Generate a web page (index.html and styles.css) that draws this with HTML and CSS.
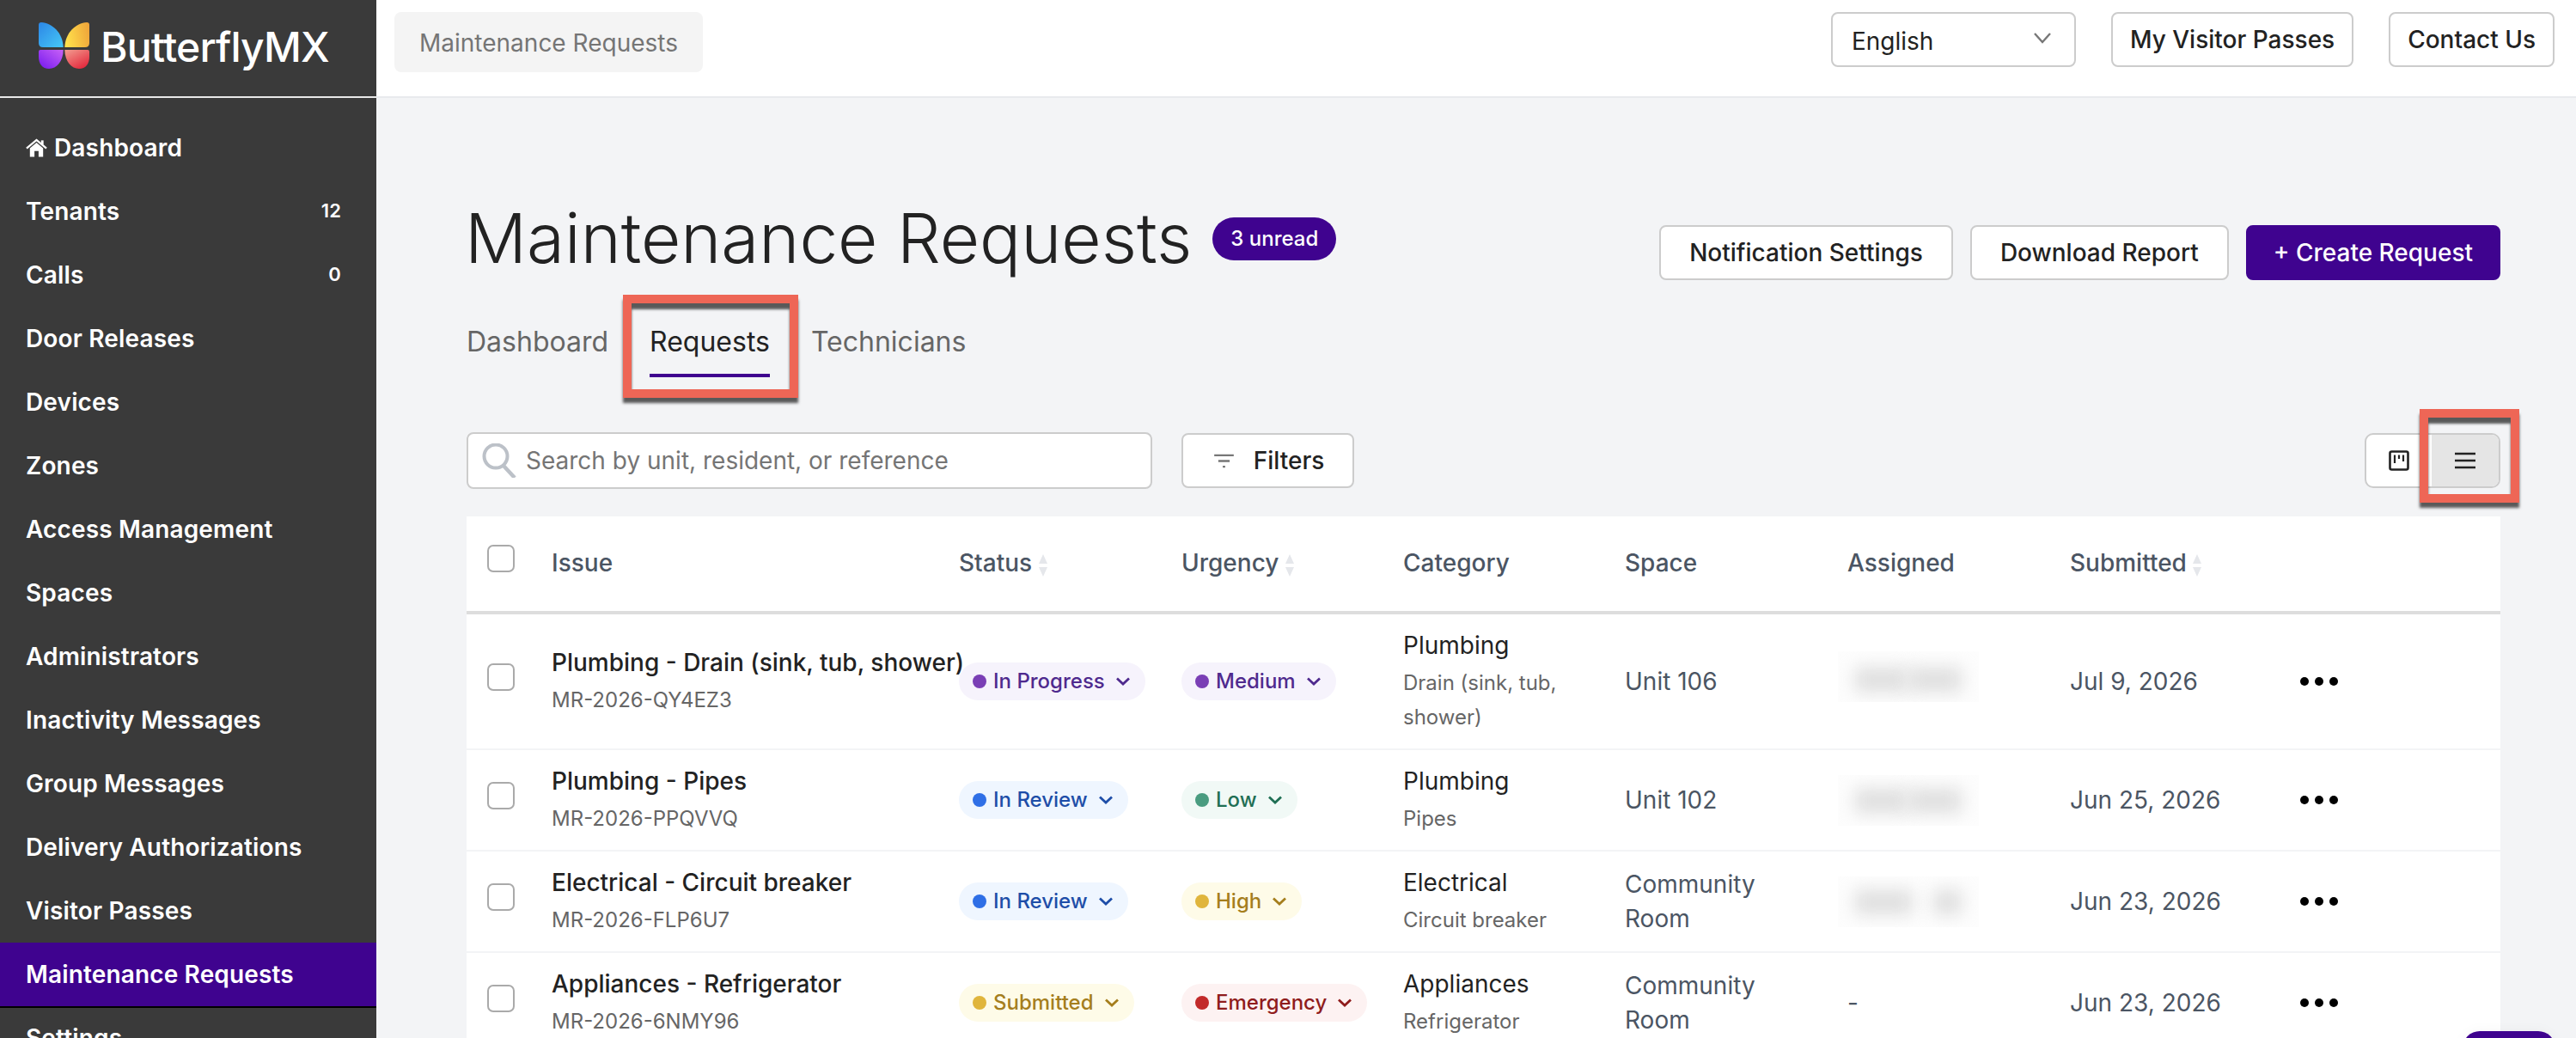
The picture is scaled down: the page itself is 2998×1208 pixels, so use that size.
FILE: index.html
```html
<!DOCTYPE html>
<html>
<head>
    <title>Maintenance Requests</title>
    <link rel="stylesheet" href="styles.css">
</head>
<body>
    <aside class="sidebar">
        <div class="logo">
            <svg class="logo-mark" viewBox="0 0 59 54">
                <defs>
                    <linearGradient id="wingBlue" x1="0" y1="0" x2="1" y2="1"><stop offset="0" stop-color="#2c86e6"/><stop offset="1" stop-color="#46c8f7"/></linearGradient>
                    <linearGradient id="wingYellow" x1="0" y1="0.6" x2="1" y2="0.4"><stop offset="0" stop-color="#ffe24c"/><stop offset="1" stop-color="#f0a63a"/></linearGradient>
                    <linearGradient id="wingPurple" x1="0" y1="1" x2="1" y2="0"><stop offset="0" stop-color="#7418ee"/><stop offset="1" stop-color="#c862f6"/></linearGradient>
                    <linearGradient id="wingRed" x1="0" y1="0" x2="0.7" y2="1"><stop offset="0" stop-color="#f29d90"/><stop offset="1" stop-color="#e42a3e"/></linearGradient>
                </defs>
                <path fill="url(#wingBlue)" d="M3 0C16 1 28 12 28.7 29L5 29Q0 29 0 24L0 3Q0 0 3 0Z"/>
                <path fill="url(#wingYellow)" d="M56 0C43 1 31 12 30.3 29L54 29Q59 29 59 24L59 3Q59 0 56 0Z"/>
                <path fill="url(#wingPurple)" d="M2 32L28.7 32C28.5 45 21 54 12 54C4 54 0 48 0 40L0 34Q0 32 2 32Z"/>
                <path fill="url(#wingRed)" d="M57 32L30.3 32C30.5 45 38 54 47 54C55 54 59 48 59 40L59 34Q59 32 57 32Z"/>
            </svg>
            <span class="logo-text">ButterflyMX</span>
        </div>
        <nav class="nav">
            <a class="nav-item">
                <span class="nav-label">
                    <svg class="home-icon" viewBox="0 0 26 22">
                        <path fill="#fff" d="M5 11.5L13 4.8L21 11.5V22H15.5V15H10.5V22H5Z"/>
                        <path fill="none" stroke="#fff" stroke-width="2.4" d="M1 11.6L13 1.6L25 11.6"/>
                        <path fill="#fff" d="M18.5 2H21.5V7H18.5Z"/>
                    </svg>
                    Dashboard
                </span>
            </a>
            <a class="nav-item"><span class="nav-label">Tenants</span><span class="nav-count">12</span></a>
            <a class="nav-item"><span class="nav-label">Calls</span><span class="nav-count">0</span></a>
            <a class="nav-item"><span class="nav-label">Door Releases</span></a>
            <a class="nav-item"><span class="nav-label">Devices</span></a>
            <a class="nav-item"><span class="nav-label">Zones</span></a>
            <a class="nav-item"><span class="nav-label">Access Management</span></a>
            <a class="nav-item"><span class="nav-label">Spaces</span></a>
            <a class="nav-item"><span class="nav-label">Administrators</span></a>
            <a class="nav-item"><span class="nav-label">Inactivity Messages</span></a>
            <a class="nav-item"><span class="nav-label">Group Messages</span></a>
            <a class="nav-item"><span class="nav-label">Delivery Authorizations</span></a>
            <a class="nav-item"><span class="nav-label">Visitor Passes</span></a>
            <a class="nav-item active"><span class="nav-label">Maintenance Requests</span></a>
            <a class="nav-item"><span class="nav-label">Settings</span></a>
        </nav>
    </aside>

    <div class="main">
        <header class="topbar">
            <div class="crumb">Maintenance Requests</div>
            <div class="topbar-actions">
                <div class="lang-select">
                    <span>English</span>
                    <svg class="lang-chevron" viewBox="0 0 22 14"><path d="M2 2L11 12L20 2" fill="none" stroke="#777" stroke-width="2.4"/></svg>
                </div>
                <button class="btn">My Visitor Passes</button>
                <button class="btn">Contact Us</button>
            </div>
        </header>

        <main class="content">
            <div class="page-head">
                <div class="page-title">
                    <h1>Maintenance Requests</h1>
                    <span class="unread">3 unread</span>
                </div>
                <div class="page-actions">
                    <button class="btn">Notification Settings</button>
                    <button class="btn">Download Report</button>
                    <button class="btn btn-primary">+ Create Request</button>
                </div>
            </div>

            <div class="tabs">
                <a class="tab">Dashboard</a>
                <a class="tab tab-active">Requests<span class="callout callout-tab"></span></a>
                <a class="tab">Technicians</a>
            </div>

            <div class="toolbar">
                <div class="search">
                    <svg class="search-icon" viewBox="0 0 40 40"><circle cx="16" cy="15" r="13.5" fill="none" stroke="#bcc1c8" stroke-width="4"/><path d="M25 26L38 40" stroke="#bcc1c8" stroke-width="4.5" fill="none"/></svg>
                    <span>Search by unit, resident, or reference</span>
                </div>
                <button class="btn btn-filter">
                    <svg class="filter-icon" viewBox="0 0 26 18"><path d="M1 2H25M6 9H20M11.5 16H14.5" stroke="#777" stroke-width="2.4" fill="none"/></svg>
                    Filters
                </button>
                <div class="view-toggle">
                    <button class="view-btn">
                        <svg class="view-icon" viewBox="0 0 24 24"><rect x="1.5" y="1.5" width="21" height="21" rx="2" fill="none" stroke="#222" stroke-width="2.6"/><path d="M7 5.5V15M12 5.5V10M17 5.5V13" stroke="#222" stroke-width="2.2" fill="none"/></svg>
                    </button>
                    <button class="view-btn view-active">
                        <svg class="view-icon" viewBox="0 0 24 20"><path d="M0 2H24M0 10H24M0 18H24" stroke="#222" stroke-width="2.4" fill="none"/></svg>
                        <span class="callout callout-view"></span>
                    </button>
                </div>
            </div>

            <table class="requests">
                <colgroup>
                    <col class="col-check"><col class="col-issue"><col class="col-std"><col class="col-urgency"><col class="col-urgency"><col class="col-std"><col class="col-std"><col class="col-date"><col>
                </colgroup>
                <thead>
                    <tr>
                        <th><input type="checkbox" class="check"></th>
                        <th>Issue</th>
                        <th>Status <svg class="sort" viewBox="0 0 10 26"><path d="M5 0L10 11H0ZM5 26L0 15H10Z" fill="#e5e7eb"/></svg></th>
                        <th>Urgency <svg class="sort" viewBox="0 0 10 26"><path d="M5 0L10 11H0ZM5 26L0 15H10Z" fill="#e5e7eb"/></svg></th>
                        <th>Category</th>
                        <th>Space</th>
                        <th>Assigned</th>
                        <th>Submitted <svg class="sort" viewBox="0 0 10 26"><path d="M5 0L10 11H0ZM5 26L0 15H10Z" fill="#e5e7eb"/></svg></th>
                        <th></th>
                    </tr>
                </thead>
                <tbody>
                    <tr>
                        <td><input type="checkbox" class="check"></td>
                        <td><div class="main-line issue-title">Plumbing - Drain (sink, tub, shower)</div><div class="sub-line">MR-2026-QY4EZ3</div></td>
                        <td><span class="pill purple"><i class="dot"></i>In Progress<svg class="chevron" viewBox="0 0 16 10"><path d="M1 1.5L8 8L15 1.5" fill="none" stroke="currentColor" stroke-width="2.8"/></svg></span></td>
                        <td><span class="pill purple"><i class="dot"></i>Medium<svg class="chevron" viewBox="0 0 16 10"><path d="M1 1.5L8 8L15 1.5" fill="none" stroke="currentColor" stroke-width="2.8"/></svg></span></td>
                        <td><div class="main-line">Plumbing</div><div class="sub-line wrap">Drain (sink, tub, shower)</div></td>
                        <td>Unit 106</td>
                        <td><div class="redacted redacted-up"><i class="lump"></i><i class="lump"></i></div></td>
                        <td>Jul 9, 2026</td>
                        <td><div class="more"><i></i><i></i><i></i></div></td>
                    </tr>
                    <tr>
                        <td><input type="checkbox" class="check"></td>
                        <td><div class="main-line issue-title">Plumbing - Pipes</div><div class="sub-line">MR-2026-PPQVVQ</div></td>
                        <td><span class="pill blue"><i class="dot"></i>In Review<svg class="chevron" viewBox="0 0 16 10"><path d="M1 1.5L8 8L15 1.5" fill="none" stroke="currentColor" stroke-width="2.8"/></svg></span></td>
                        <td><span class="pill green"><i class="dot"></i>Low<svg class="chevron" viewBox="0 0 16 10"><path d="M1 1.5L8 8L15 1.5" fill="none" stroke="currentColor" stroke-width="2.8"/></svg></span></td>
                        <td><div class="main-line">Plumbing</div><div class="sub-line">Pipes</div></td>
                        <td>Unit 102</td>
                        <td><div class="redacted"><i class="lump"></i><i class="lump"></i></div></td>
                        <td>Jun 25, 2026</td>
                        <td><div class="more"><i></i><i></i><i></i></div></td>
                    </tr>
                    <tr>
                        <td><input type="checkbox" class="check"></td>
                        <td><div class="main-line issue-title">Electrical - Circuit breaker</div><div class="sub-line">MR-2026-FLP6U7</div></td>
                        <td><span class="pill blue"><i class="dot"></i>In Review<svg class="chevron" viewBox="0 0 16 10"><path d="M1 1.5L8 8L15 1.5" fill="none" stroke="currentColor" stroke-width="2.8"/></svg></span></td>
                        <td><span class="pill yellow"><i class="dot"></i>High<svg class="chevron" viewBox="0 0 16 10"><path d="M1 1.5L8 8L15 1.5" fill="none" stroke="currentColor" stroke-width="2.8"/></svg></span></td>
                        <td><div class="main-line">Electrical</div><div class="sub-line">Circuit breaker</div></td>
                        <td>Community Room</td>
                        <td><div class="redacted redacted-gap"><i class="lump lump-wide"></i><i class="lump"></i></div></td>
                        <td>Jun 23, 2026</td>
                        <td><div class="more"><i></i><i></i><i></i></div></td>
                    </tr>
                    <tr>
                        <td><input type="checkbox" class="check"></td>
                        <td><div class="main-line issue-title">Appliances - Refrigerator</div><div class="sub-line">MR-2026-6NMY96</div></td>
                        <td><span class="pill yellow"><i class="dot"></i>Submitted<svg class="chevron" viewBox="0 0 16 10"><path d="M1 1.5L8 8L15 1.5" fill="none" stroke="currentColor" stroke-width="2.8"/></svg></span></td>
                        <td><span class="pill red"><i class="dot"></i>Emergency<svg class="chevron" viewBox="0 0 16 10"><path d="M1 1.5L8 8L15 1.5" fill="none" stroke="currentColor" stroke-width="2.8"/></svg></span></td>
                        <td><div class="main-line">Appliances</div><div class="sub-line">Refrigerator</div></td>
                        <td>Community Room</td>
                        <td>-</td>
                        <td>Jun 23, 2026</td>
                        <td><div class="more"><i></i><i></i><i></i></div></td>
                    </tr>
                </tbody>
            </table>
        </main>
    </div>

    <div class="chat-bubble"></div>
</body>
</html>
```

FILE: styles.css
```css
* {
    box-sizing: border-box;
}

html, body {
    height: 1208px;
    margin: 0;
    overflow: hidden;
}

body {
    display: flex;
    font-family: 'Inter', 'Liberation Sans', sans-serif;
    font-size: 28px;
    background-color: #f3f4f6;
    color: #222;
}

/* sidebar */
.sidebar {
    width: 438px;
    flex-shrink: 0;
    background-color: #3a3a3a;
    color: #fff;
}

.logo {
    height: 114px;
    padding: 26px 0 0 45px;
    display: flex;
    align-items: flex-start;
    gap: 13px;
    border-bottom: 2px solid #e8e8e8;
}

.logo-mark {
    width: 59px;
    height: 54px;
    flex-shrink: 0;
}

.logo-text {
    font-size: 48px;
    font-weight: 500;
    line-height: 58px;
    letter-spacing: -0.8px;
}

.nav {
    padding-top: 21px;
}

.nav-item {
    height: 74px;
    padding: 0 41px 0 30px;
    display: flex;
    align-items: center;
    justify-content: space-between;
    font-weight: 600;
    letter-spacing: 0.15px;
}

.nav-item.active {
    background-color: #3f038f;
    box-shadow: 0 2px 0 #000;
}

.nav-label {
    display: flex;
    align-items: center;
    gap: 8px;
}

.nav-count {
    font-size: 22px;
    margin-top: -2px;
}

.home-icon {
    width: 25px;
    height: 22px;
}

/* top bar */
.main {
    flex: 1;
    min-width: 0;
}

.topbar {
    height: 114px;
    padding: 14px 25px 0 21px;
    display: flex;
    justify-content: space-between;
    align-items: flex-start;
    background-color: #fff;
    border-bottom: 2px solid #e8eaed;
}

.crumb {
    width: 359px;
    height: 70px;
    line-height: 72px;
    text-align: center;
    background-color: #f4f4f4;
    border-radius: 8px;
    color: #757575;
}

.topbar-actions {
    display: flex;
    gap: 41px;
}

.lang-select {
    width: 285px;
    height: 64px;
    padding: 4px 26px 0 22px;
    display: flex;
    align-items: center;
    justify-content: space-between;
    background-color: #fff;
    border: 2px solid #ccc;
    border-radius: 8px;
}

.lang-chevron {
    width: 22px;
    height: 14px;
    margin-top: -8px;
}

.btn {
    height: 64px;
    padding: 0 20px;
    font-family: inherit;
    font-size: 28px;
    font-weight: 500;
    color: #222;
    background-color: #fff;
    border: 2px solid #ccc;
    border-radius: 8px;
}

.btn-primary {
    color: #fff;
    background-color: #3f038f;
    border-color: #3f038f;
}

/* page */
.content {
    padding: 115px 88px 0 105px;
}

.page-head {
    display: flex;
    justify-content: space-between;
    align-items: flex-start;
}

.page-title {
    display: flex;
    align-items: center;
    gap: 24px;
}

h1 {
    margin: 0 0 0 -2px;
    font-size: 80px;
    font-weight: 300;
    line-height: 96px;
    color: #222;
}

.unread {
    height: 50px;
    margin-top: 2px;
    padding: 0 21px;
    line-height: 50px;
    font-size: 24px;
    font-weight: 500;
    color: #fff;
    background-color: #3f038f;
    border-radius: 25px;
}

.page-actions {
    display: flex;
    gap: 20px;
    padding-top: 33px;
}

.page-actions .btn {
    padding: 0 33px;
}

.page-actions .btn-primary {
    padding: 0 30px;
}

.tabs {
    display: flex;
    gap: 48px;
    margin-top: 50px;
}

.tab {
    position: relative;
    height: 63px;
    line-height: 44px;
    font-size: 32px;
    color: #666;
}

.tab-active {
    color: #222;
    border-bottom: 4px solid #3f038f;
}

/* red annotation boxes drawn over the screenshot */
.callout {
    position: absolute;
    border: 10px solid #ee6656;
    box-shadow: 0 6px 3px rgba(50, 50, 50, 0.8), inset 0 7px 3px rgba(50, 50, 50, 0.8);
}

.callout-tab {
    top: -33px;
    left: -31px;
    right: -33px;
    bottom: -28px;
}

.callout-view {
    top: -30px;
    left: -14px;
    right: -24px;
    bottom: -19px;
}

.toolbar {
    display: flex;
    align-items: center;
    margin-top: 64px;
}

.search {
    width: 798px;
    height: 66px;
    padding: 0 16px;
    display: flex;
    align-items: center;
    gap: 11px;
    font-size: 28px;
    color: #757575;
    background-color: #fff;
    border: 2px solid #ccc;
    border-radius: 8px;
}

.search-icon {
    width: 40px;
    height: 40px;
    flex-shrink: 0;
}

.btn-filter {
    width: 201px;
    margin-left: 34px;
    padding: 0 0 0 2px;
    display: flex;
    align-items: center;
    justify-content: center;
    gap: 22px;
}

.filter-icon {
    width: 25px;
    height: 17px;
}

.view-toggle {
    display: flex;
    margin-left: auto;
    height: 64px;
    background-color: #fff;
    border: 2px solid #ccc;
    border-radius: 10px;
}

.view-btn {
    position: relative;
    width: 76px;
    padding: 0;
    display: flex;
    align-items: center;
    justify-content: center;
    background: none;
    border: none;
}

.view-active {
    width: 78px;
    background-color: #e5e5e5;
    border-radius: 0 8px 8px 0;
}

.view-icon {
    width: 24px;
    height: 24px;
}

/* table */
.requests {
    width: 100%;
    margin-top: 32px;
    table-layout: fixed;
    border-spacing: 0;
    background-color: #fff;
    color: #4b5563;
}

.col-check { width: 99px; }
.col-issue { width: 474px; }
.col-std { width: 259px; }
.col-urgency { width: 258px; }
.col-date { width: 268px; }

.requests th {
    height: 114px;
    padding: 0 0 2px;
    text-align: left;
    font-weight: 500;
    border-bottom: 4px solid #ddd;
}

.requests td {
    padding: 16px 40px 16px 0;
    border-bottom: 2px solid #f3f4f6;
    line-height: 40px;
}

.requests td:nth-child(2),
.requests td:nth-child(3),
.requests td:nth-child(4) {
    padding-right: 0;
}

.sort {
    width: 10px;
    height: 26px;
    vertical-align: -6px;
}

.check {
    display: block;
    width: 32px;
    height: 32px;
    margin: 0 0 10px 24px;
    appearance: none;
    background-color: #fff;
    border: 2px solid #aaa;
    border-radius: 7px;
}

.main-line {
    height: 44px;
    line-height: 40px;
    color: #222;
    white-space: nowrap;
}

.issue-title {
    font-weight: 500;
}

.sub-line {
    line-height: 40px;
    font-size: 24px;
    color: #666;
    white-space: nowrap;
}

.sub-line.wrap {
    white-space: normal;
}

.pill {
    display: inline-flex;
    align-items: center;
    height: 44px;
    padding: 0 18px 0 16px;
    font-size: 24px;
    font-weight: 500;
    border-radius: 22px;
}

.pill .dot {
    width: 16px;
    height: 16px;
    margin-right: 8px;
    border-radius: 50%;
}

.chevron {
    width: 16px;
    height: 10px;
    margin-left: 13px;
}

.purple { background-color: #f6f3fc; color: #4f2a8e; }
.purple .dot { background-color: #7a3fb5; }
.blue { background-color: #eff6ff; color: #1e4ea8; }
.blue .dot { background-color: #2f6fe6; }
.green { background-color: #f1f9f6; color: #1f6f54; }
.green .dot { background-color: #4a9c80; }
.yellow { background-color: #fefbe8; color: #a57e1d; }
.yellow .dot { background-color: #e0b53c; }
.red { background-color: #fdf2f2; color: #8f1c1c; }
.red .dot { background-color: #c22a2a; }

/* names in the Assigned column are blurred out in the source */
.redacted {
    width: 164px;
    height: 59px;
    margin-left: -11px;
    padding: 16px 20px 0;
    display: flex;
    gap: 0;
    overflow: hidden;
    background-color: #fdfdfd;
}

.redacted-up {
    margin-bottom: 12px;
    padding-top: 19px;
}

.redacted-gap {
    gap: 24px;
}

.lump {
    flex: 1;
    height: 28px;
    background-color: #dedede;
    filter: blur(10px);
}

.lump-wide {
    flex: 2;
}

.more {
    display: flex;
    gap: 7px;
}

.more i {
    width: 10px;
    height: 10px;
    background-color: #000;
    border-radius: 50%;
}

.chat-bubble {
    position: fixed;
    left: 2866px;
    top: 1200px;
    width: 108px;
    height: 60px;
    background-color: #3f038f;
    border-radius: 20px;
    box-shadow: 0 0 16px rgba(0, 0, 0, 0.04);
}
```
